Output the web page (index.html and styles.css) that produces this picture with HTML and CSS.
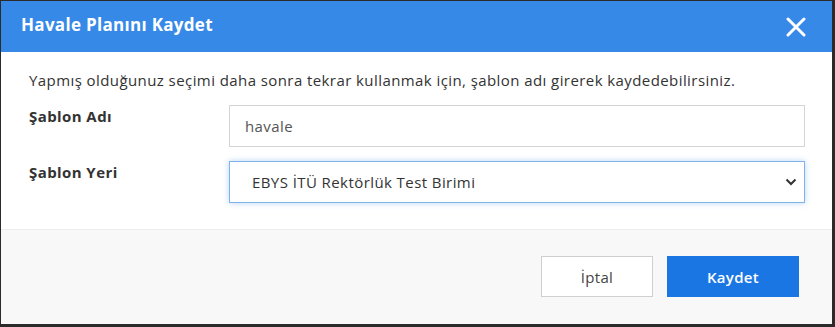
FILE: index.html
```html
<!DOCTYPE html>
<html lang="tr">
<head>
    <meta charset="UTF-8">
    <title>Havale Planını Kaydet</title>
    <link rel="stylesheet" href="styles.css">
</head>
<body>
    <div class="modal">
        <div class="modal-header">
            <div class="modal-title">Havale Planını Kaydet</div>
            <button class="close-button" aria-label="Kapat">
                <svg width="20" height="20" viewBox="0 0 20 20">
                    <path d="M2 2 L18 18 M18 2 L2 18" stroke="#fff" stroke-width="3" stroke-linecap="round"/>
                </svg>
            </button>
        </div>

        <div class="modal-body">
            <p class="intro">Yapmış olduğunuz seçimi daha sonra tekrar kullanmak için, şablon adı girerek kaydedebilirsiniz.</p>

            <div class="form-row">
                <label class="form-label" for="sablon-adi">Şablon Adı</label>
                <input class="form-input" id="sablon-adi" type="text" value="havale">
            </div>

            <div class="form-row">
                <label class="form-label" for="sablon-yeri">Şablon Yeri</label>
                <div class="select-box">
                    <select class="form-select" id="sablon-yeri">
                        <option>EBYS İTÜ Rektörlük Test Birimi</option>
                    </select>
                    <svg class="select-arrow" width="12" height="8" viewBox="0 0 12 8">
                        <path d="M1.5 1.5 L6 6 L10.5 1.5" fill="none" stroke="#333" stroke-width="2"/>
                    </svg>
                </div>
            </div>
        </div>

        <div class="modal-footer">
            <button class="btn btn-cancel">İptal</button>
            <button class="btn btn-save">Kaydet</button>
        </div>
    </div>
</body>
</html>
```

FILE: styles.css
```css
body {
    margin: 0;
    background-color: #2b2b2b;
    font-family: "Open Sans", Lato, sans-serif;
}
.modal {
    width: 831px;
    height: 323px;
    margin: 1px 0 0 1px;
    background-color: #fff;
    display: flex;
    flex-direction: column;
}
.modal-header {
    height: 51px;
    background-color: #3789e8;
    display: flex;
    align-items: center;
    justify-content: space-between;
    padding: 0 26px 0 20px;
}
.modal-title {
    color: #fff;
    font-weight: bold;
    font-size: 17px;
    letter-spacing: 0.3px;
    margin-top: -4px;
}
.close-button {
    background: none;
    border: none;
    padding: 0;
    display: flex;
    cursor: pointer;
}
.modal-body {
    padding: 18px 27px 0 28px;
    height: 159px;
    letter-spacing: 0.42px;
}
.intro {
    margin: 0 0 15px 0;
    font-size: 15px;
    color: #333;
}
.form-row {
    display: flex;
    align-items: flex-start;
    margin-bottom: 14px;
}
.form-label {
    width: 200px;
    font-weight: bold;
    font-size: 15px;
    color: #333;
    padding-top: 1px;
}
.form-input,
.form-select {
    box-sizing: border-box;
    width: 576px;
    height: 42px;
    border: 1px solid #d4d4d4;
    font-family: inherit;
    font-size: 15px;
    letter-spacing: 0.42px;
    color: #555;
    padding: 0 15px;
    background-color: #fff;
    outline: none;
}
.select-box {
    position: relative;
}
.form-select {
    appearance: none;
    padding-left: 22px;
    border-color: #7fb3ec;
    box-shadow: 0 0 6px rgba(102, 160, 230, 0.45);
    color: #333;
}
.select-arrow {
    position: absolute;
    right: 8px;
    top: 17px;
    pointer-events: none;
}
.modal-footer {
    flex: 1;
    background-color: #f8f8f8;
    border-top: 1px solid #ececec;
    display: flex;
    justify-content: flex-end;
    align-items: flex-start;
    padding: 26px 33px 0 0;
    gap: 14px;
}
.btn {
    height: 41px;
    font-family: inherit;
    font-size: 15px;
    letter-spacing: 0.3px;
    cursor: pointer;
}
.btn-cancel {
    width: 112px;
    background-color: #fff;
    border: 1px solid #cfcfcf;
    color: #444;
}
.btn-save {
    width: 132px;
    background-color: #1a76e3;
    border: 1px solid #1a76e3;
    color: #fff;
    font-weight: 600;
}
```
